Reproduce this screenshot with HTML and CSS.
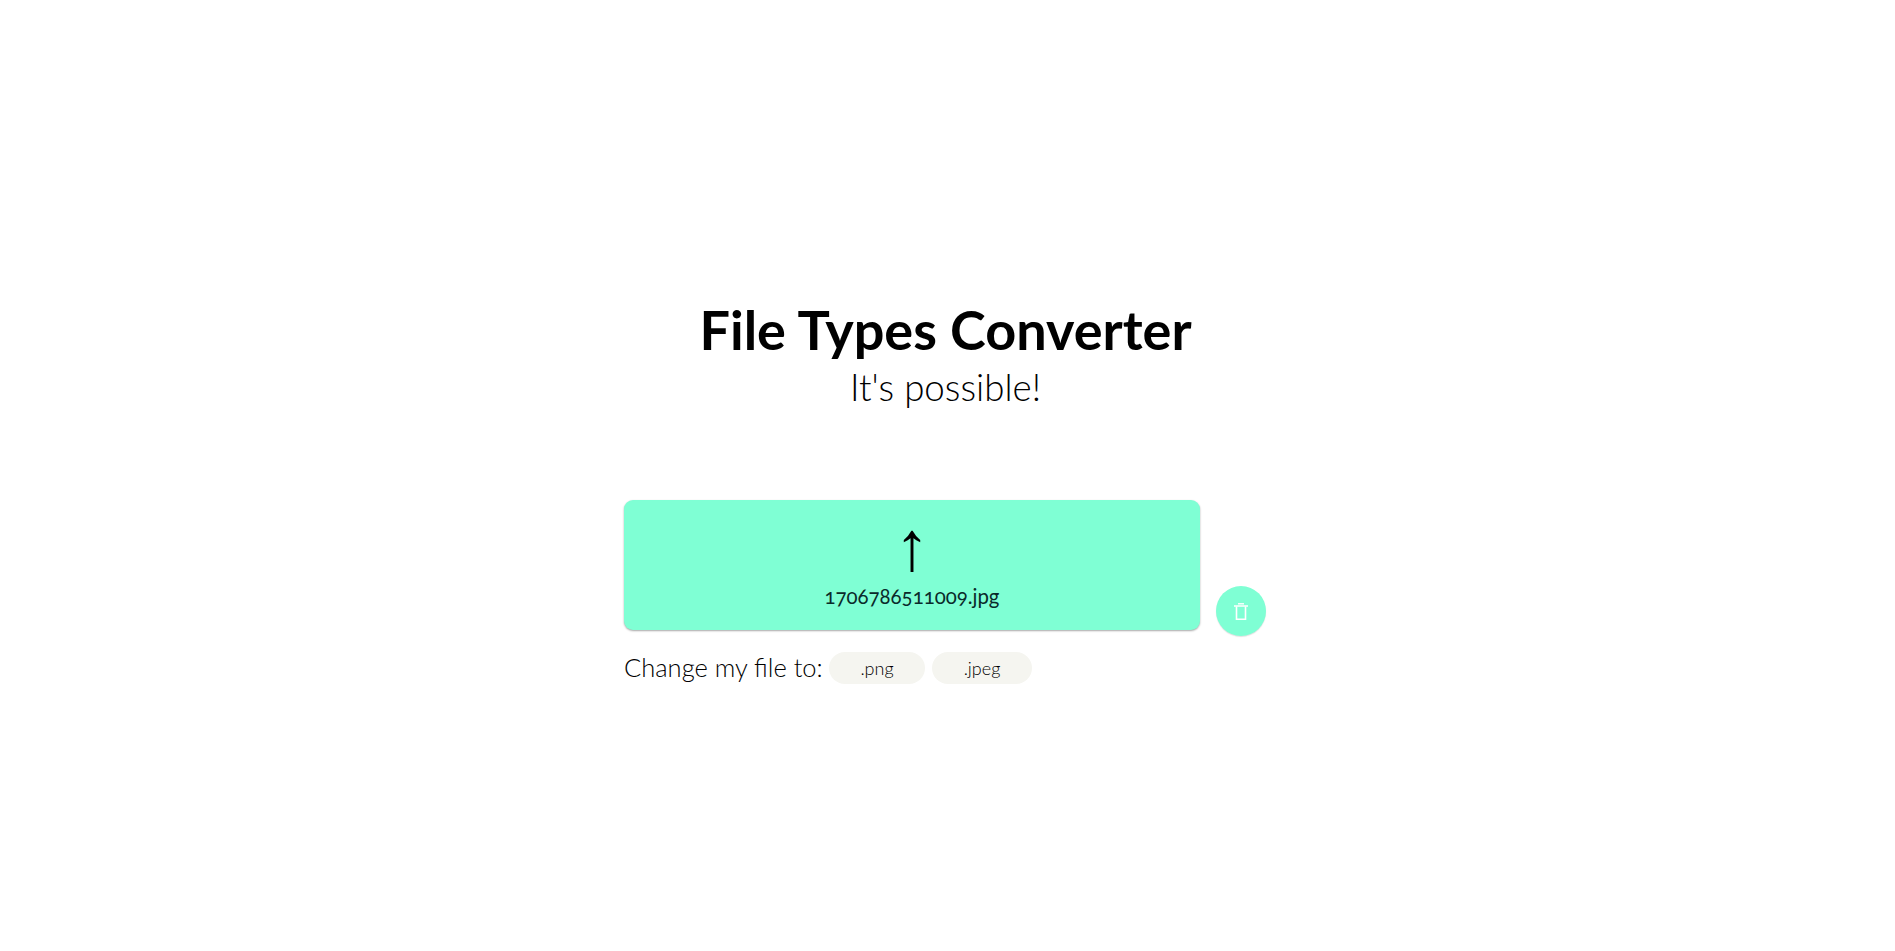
FILE: index.html
```html
<!DOCTYPE html>
<html lang="en">
<head>
	<meta charset="utf-8" />
	<title>File Types Converter</title>
	<link rel="stylesheet" href="styles.css">
</head>
<body>
	<div class="page">
		<div class="header">
			<h1 class="title">File Types Converter</h1>
			<div class="subtitle">It's possible!</div>
		</div>

		<div class="converter">
			<div class="upload-row">
				<div class="dropzone">
					<div class="arrow">↑</div>
					<div class="filename">1706786511009.jpg</div>
				</div>
				<div class="delete-btn">
					<svg viewBox="0 0 14 17" width="14" height="17" fill="none" stroke="#fff">
						<path d="M0 3h14" stroke-width="1.5" />
						<path d="M4 .8h6" stroke-width="1.4" />
						<path d="M2.5 3.5v12.7h9V3.5" stroke-width="1.6" />
					</svg>
				</div>
			</div>
			<div class="options">
				<span class="options-label">Change my file to:</span>
				<div class="pill pill-png">.png</div>
				<div class="pill pill-jpeg">.jpeg</div>
			</div>
		</div>
	</div>
</body>
</html>
```

FILE: styles.css
```css
* {box-sizing: border-box;}
html, body {height: 100%;}
body {
	margin: 0;
	background: #fff;
	color: #000;
	font-family: "Lato", "Open Sans", sans-serif;
}

.page {
	display: flex;
	flex-direction: column;
	align-items: center;
	padding-top: 298px;
}

.header {text-align: center;margin-right: 4px;}
.title {
	margin: 0;
	font-size: 54px;
	line-height: 64px;
	font-weight: 700;
}
.subtitle {
	font-size: 36.7px;
	line-height: 50px;
	font-weight: 300;
}

.converter {margin-top: 88px;width: 642px;margin-left: -5px;}

.upload-row {display: flex;align-items: flex-end;gap: 16px;}
.dropzone {
	display: flex;
	flex-direction: column;
	align-items: center;
	width: 576px;
	height: 130px;
	padding-top: 12px;
	border-radius: 9px;
	background: #7fffd4;
	box-shadow: 0 1px 2px rgba(0,0,0,.35);
}
.arrow {
	font-family: "Liberation Sans", sans-serif;
	font-size: 70px;
	line-height: 68px;
}
.filename {
	margin-top: 3px;
	font-size: 20.4px;
	line-height: 26px;
	color: #0a2a2a;
	font-variant-numeric: oldstyle-nums;
}

.delete-btn {
	display: flex;
	align-items: center;
	justify-content: center;
	width: 50px;
	height: 50px;
	margin-bottom: -6px;
	border-radius: 50%;
	background: #7fffd4;
	box-shadow: 0 1px 1px rgba(0,0,0,.12);
}

.options {display: flex;align-items: center;margin-top: 22px;}
.options-label {
	width: 205px;
	margin-top: -2px;
	font-size: 25.5px;
	font-weight: 300;
	color: #000;
	white-space: nowrap;
}
.pill {
	display: flex;
	align-items: center;
	justify-content: center;
	height: 32px;
	border-radius: 16px;
	background: #f5f5f0;
	font-size: 18px;
	font-weight: 300;
	color: #000;
}
.pill-png {width: 96px;margin-right: 7px;}
.pill-jpeg {width: 100px;}
```
